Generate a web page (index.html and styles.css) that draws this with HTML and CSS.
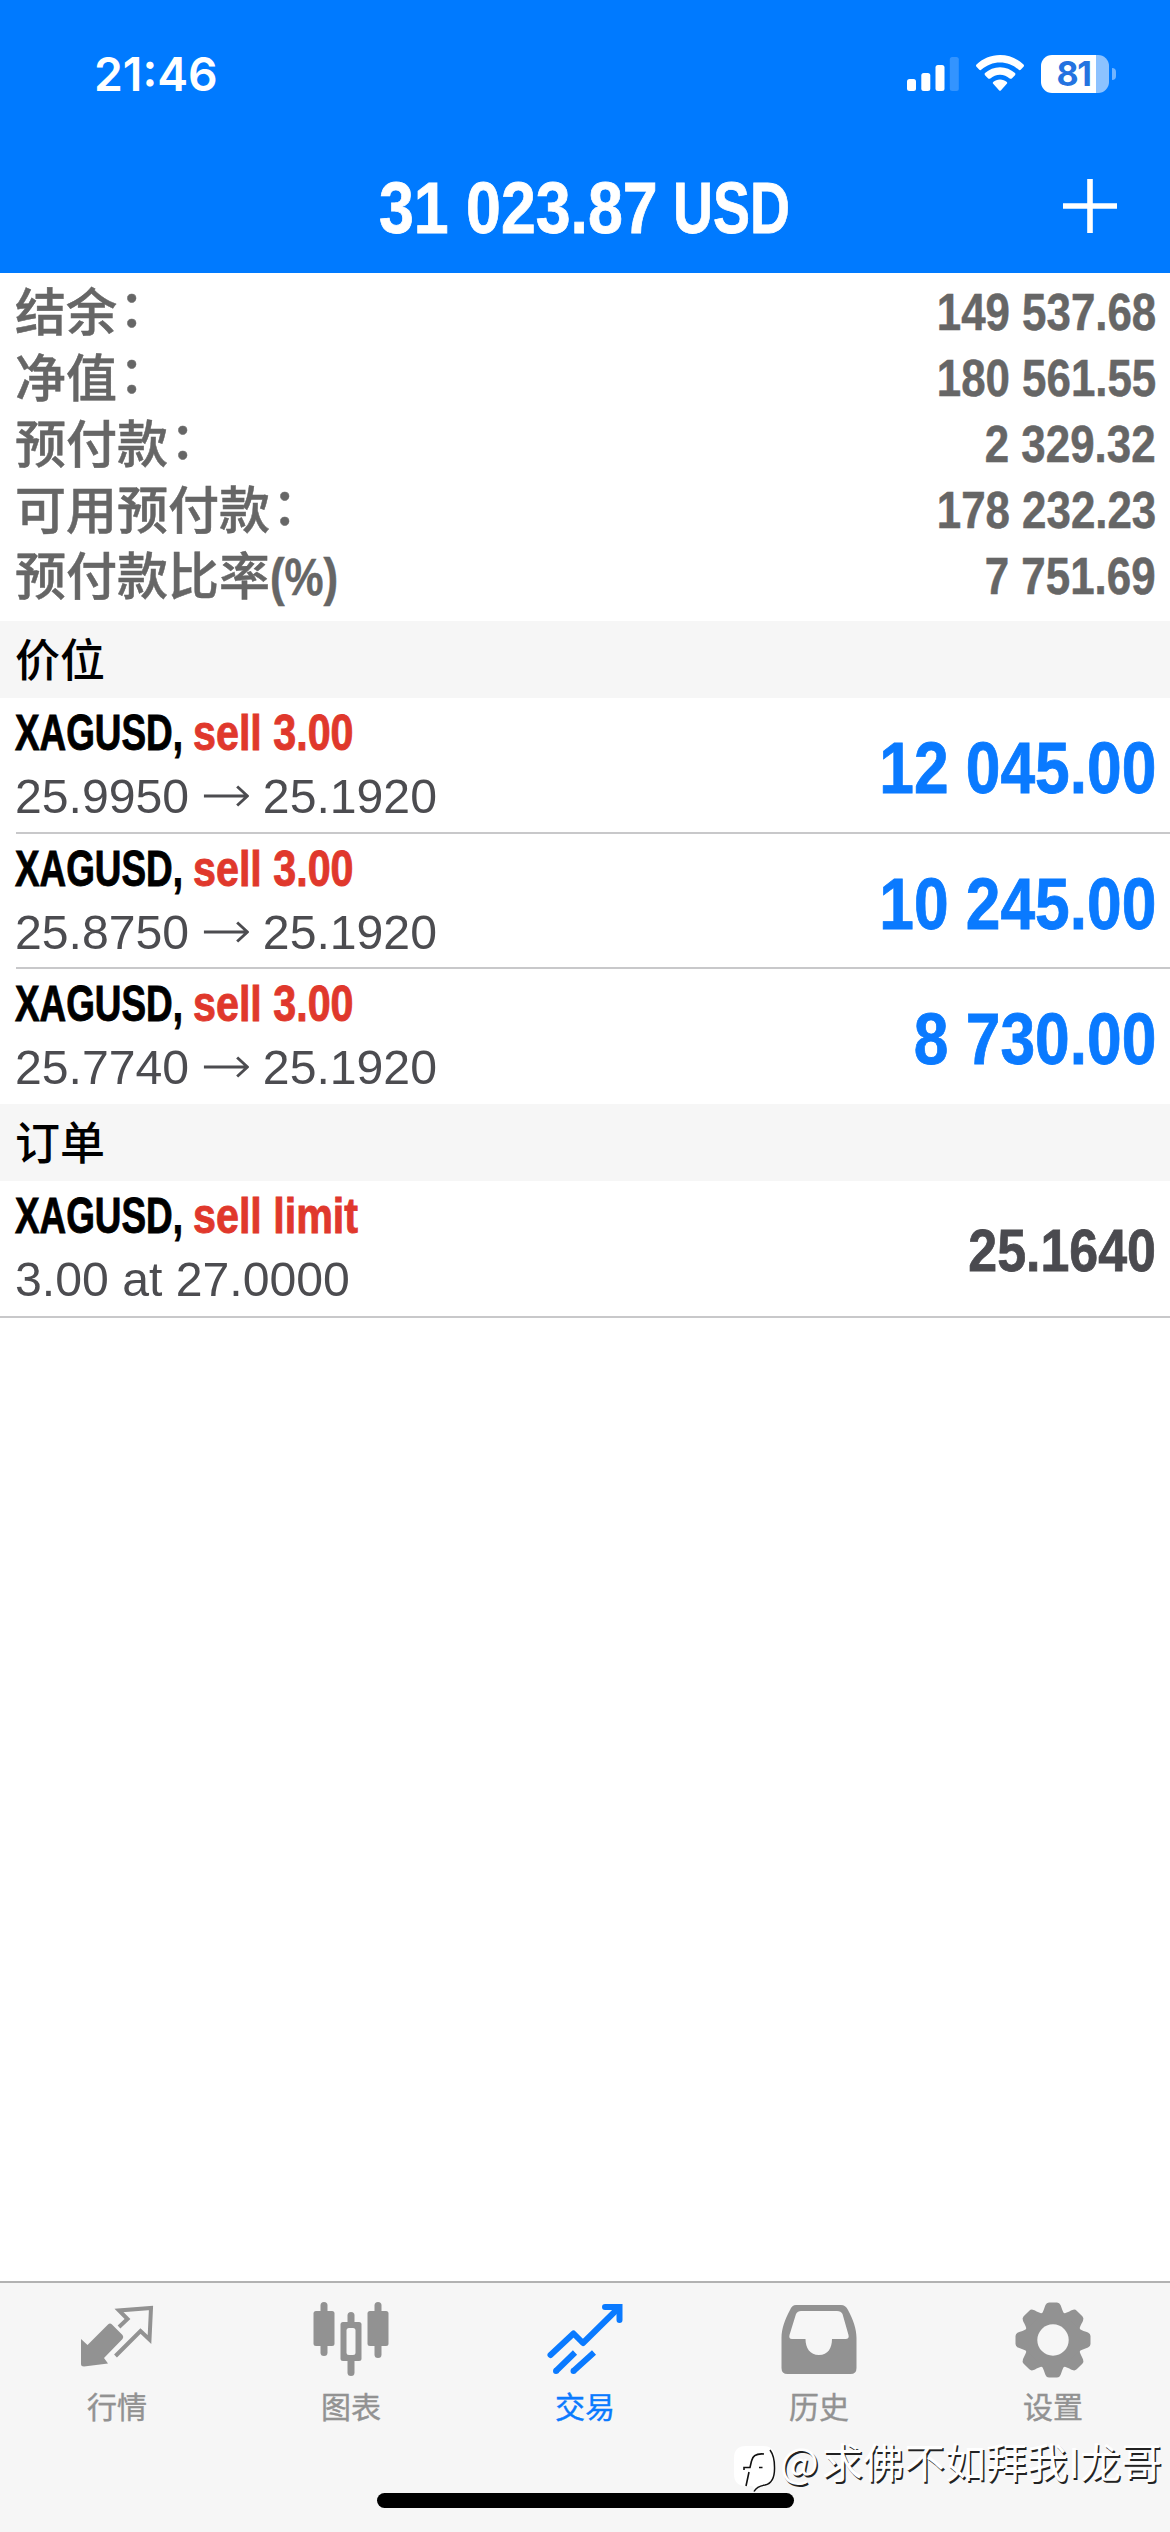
FILE: index.html
```html
<!DOCTYPE html>
<html lang="zh-CN">
<head>
<meta charset="utf-8">
<title>交易</title>
<link rel="stylesheet" href="styles.css">
</head>
<body>
<div class="app">
  <header class="header">
    <div class="status">
      <span class="clock">21:46</span>
      <div class="status-icons">
        <svg class="signal" width="52" height="34" viewBox="0 0 52 34" fill="#fff">
          <rect x="0" y="22" width="9" height="12" rx="2.5"/>
          <rect x="14.3" y="16" width="9" height="18" rx="2.5"/>
          <rect x="28.5" y="8" width="9" height="26" rx="2.5"/>
          <rect x="42.8" y="0" width="9" height="34" rx="2.5" opacity=".2"/>
        </svg>
        <svg class="wifi" width="48" height="36" viewBox="0 0 48 36" fill="#fff">
          <path d="M24 0C33 0 41.500 3.600 47.500 9.500Q48.500 10.700 47.500 11.700L44.700 14.700Q43.600 15.600 42.500 14.600C37.500 10 31 7.400 24 7.400S10.500 10 5.500 14.600Q4.400 15.600 3.300 14.700L.5 11.700Q-.5 10.700 .5 9.500C6.500 3.600 15 0 24 0Z"/>
          <path d="M24 12.300C29.700 12.300 35 14.500 39 18.100Q40 19.200 39 20.300L35.800 23.400Q34.800 24.300 33.700 23.400C31 21.100 27.700 19.700 24 19.700S17 21.100 14.300 23.400Q13.200 24.300 12.200 23.400L9 20.300Q8 19.200 9 18.100C13 14.500 18.300 12.300 24 12.300Z"/>
          <path d="M24 24.500C26.700 24.500 29 25.500 30.800 27Q31.600 27.900 30.800 28.800L25 35.200Q24 36.200 23 35.200L17.200 28.800Q16.400 27.900 17.200 27C19 25.500 21.300 24.500 24 24.500Z"/>
        </svg>
        <div class="battery"><span class="battery-level">81</span></div>
        <span class="battery-tip"></span>
      </div>
    </div>
    <div class="titlebar">
      <h1 class="title"><span class="title-num">31 023.87</span><span class="title-cur">USD</span></h1>
      <svg class="plus" width="54" height="54" viewBox="0 0 54 54"><path d="M27 0V54M0 27H54" stroke="#fff" stroke-width="5.6"/></svg>
    </div>
  </header>

  <main class="content">
    <dl class="summary">
      <div class="line"><dt>结余<i class="colon">：</i></dt><dd>149 537.68</dd></div>
      <div class="line"><dt>净值<i class="colon">：</i></dt><dd>180 561.55</dd></div>
      <div class="line"><dt>预付款<i class="colon">：</i></dt><dd>2 329.32</dd></div>
      <div class="line"><dt>可用预付款<i class="colon">：</i></dt><dd>178 232.23</dd></div>
      <div class="line"><dt>预付款比率<span class="pct">(%)</span></dt><dd>7 751.69</dd></div>
    </dl>

    <h2 class="section">价位</h2>
    <ul class="rows">
      <li class="row">
        <div class="info">
          <div class="head"><span class="sym">XAGUSD,</span><span class="side">sell 3.00</span></div>
          <div class="detail"><span>25.9950</span><svg class="arrow" width="46" height="22" viewBox="0 0 46 22"><path d="M0 11H44M34 1.500L44.500 11L34 20.500"/></svg><span>25.1920</span></div>
        </div>
        <div class="profit">12 045.00</div>
      </li>
      <li class="row">
        <div class="info">
          <div class="head"><span class="sym">XAGUSD,</span><span class="side">sell 3.00</span></div>
          <div class="detail"><span>25.8750</span><svg class="arrow" width="46" height="22" viewBox="0 0 46 22"><path d="M0 11H44M34 1.500L44.500 11L34 20.500"/></svg><span>25.1920</span></div>
        </div>
        <div class="profit">10 245.00</div>
      </li>
      <li class="row">
        <div class="info">
          <div class="head"><span class="sym">XAGUSD,</span><span class="side">sell 3.00</span></div>
          <div class="detail"><span>25.7740</span><svg class="arrow" width="46" height="22" viewBox="0 0 46 22"><path d="M0 11H44M34 1.500L44.500 11L34 20.500"/></svg><span>25.1920</span></div>
        </div>
        <div class="profit">8 730.00</div>
      </li>
    </ul>

    <h2 class="section">订单</h2>
    <ul class="rows orders">
      <li class="row">
        <div class="info">
          <div class="head"><span class="sym">XAGUSD,</span><span class="side">sell limit</span></div>
          <div class="detail"><span>3.00 at 27.0000</span></div>
        </div>
        <div class="price">25.1640</div>
      </li>
    </ul>
  </main>

  <nav class="tabs">
    <a class="tab">
      <svg width="76" height="76" viewBox="0 0 76 76">
        <path d="M2 37L8.500 43L29 22.500Q31 20.500 33 22.500L43.500 33Q45 35 43.500 37L25 56L29 61.500L5 64.500Q2 64.500 2 62Z" fill="#929292"/>
        <path d="M40 25L48.500 17L40 8.500L72 6L70.500 37.500L61.500 29L36.500 54" fill="none" stroke="#929292" stroke-width="4"/>
      </svg>
      <span>行情</span>
    </a>
    <a class="tab">
      <svg width="76" height="76" viewBox="0 0 76 76" fill="#929292">
        <rect x="7.500" y="0" width="7" height="54" rx="3.500"/><rect x=".5" y="9" width="21" height="35" rx="2.500"/>
        <rect x="61.500" y="0" width="7" height="56" rx="3.500"/><rect x="54.500" y="9" width="21" height="35" rx="2.500"/>
        <rect x="34.500" y="10" width="7" height="64" rx="3.500"/><rect x="27.500" y="20" width="21" height="39" rx="2.500"/>
        <rect x="33.500" y="26" width="9" height="27" rx="2.500" fill="#f6f6f6"/>
      </svg>
      <span>图表</span>
    </a>
    <a class="tab active">
      <svg width="76" height="76" viewBox="0 0 76 76" fill="none" stroke="#0a7aff" stroke-width="6">
        <path d="M3.500 53L26.500 31.500L36 41L71 6.500" stroke-linecap="round" stroke-linejoin="round"/>
        <path d="M58 5H72.500V18" stroke-linecap="round"/>
        <path d="M9 69L28 50.500M26.500 69L47 50.500"/>
        <path d="M9 69h.01M26.500 69h.01" stroke-linecap="round"/>
      </svg>
      <span>交易</span>
    </a>
    <a class="tab">
      <svg width="76" height="76" viewBox="0 0 76 76">
        <path fill="#929292" fill-rule="evenodd" d="M15 3H60Q64.500 3 67 8C72 17 75.500 27 75.500 36V66Q75.500 72 69.500 72H6.500Q.5 72 .5 66V36C.5 27 4 17 9 8Q11 3 15 3ZM20 9Q16.500 9 15 12L8.500 33Q7.500 37 11 37H24.500C24.500 46 29 53 38 53S51 46 51 37H64.500Q68.500 37 67.500 33L61.500 12Q60 9 56 9Z"/>
      </svg>
      <span>历史</span>
    </a>
    <a class="tab">
      <svg width="76" height="76" viewBox="-38 -38 76 76">
        <defs><path id="tooth" d="M-11.500 -26C-9.500 -28 -8.500 -33 -7.500 -35Q-6.500 -37.500 -4 -37.500H4Q6.500 -37.500 7.500 -35C8.500 -33 9.500 -28 11.500 -26Z"/></defs>
        <g fill="#929292">
          <circle r="29"/>
          <use href="#tooth"/><use href="#tooth" transform="rotate(45)"/><use href="#tooth" transform="rotate(90)"/><use href="#tooth" transform="rotate(135)"/>
          <use href="#tooth" transform="rotate(180)"/><use href="#tooth" transform="rotate(225)"/><use href="#tooth" transform="rotate(270)"/><use href="#tooth" transform="rotate(315)"/>
        </g>
        <circle r="15.700" fill="#f6f6f6"/>
      </svg>
      <span>设置</span>
    </a>
    <div class="home"></div>
    <div class="watermark">
      <svg width="44" height="48" viewBox="0 0 44 48">
        <path d="M12 1H29Q41 1 41 13V27Q41 40 29 41Q23 42 20 46Q20 41 17 41H12Q0 41 0 29V13Q0 1 12 1Z" fill="#fff"/>
        <path d="M36 5Q40.500 11 40.500 22Q41 38 31 40Q23 41 20 46.500" fill="none" stroke="#111" stroke-width="1.500"/>
        <path d="M30 9Q19 8 17.500 16L16 22.500H10V25M25 22.500H28.500M15 27L12 41" fill="none" stroke="#111" stroke-width="1.600"/>
      </svg>
      <span class="at">@</span><span>求佛不如拜我I龙哥</span>
    </div>
  </nav>
</div>
</body>
</html>
```
FILE: styles.css
```css
* { box-sizing: border-box; margin: 0; padding: 0; }
body { background: #fff; font-family: "Liberation Sans", "Noto Sans CJK SC", sans-serif; }
ul { list-style: none; }
.app { width: 1170px; height: 2532px; display: flex; flex-direction: column; overflow: hidden; }

/* header */
.header { height: 273px; background: #007aff; color: #fff; flex: none; }
.status { height: 141px; padding: 0 54px 0 94px; display: flex; justify-content: space-between; }
.clock { font: 600 47px/56px Inter, sans-serif; margin-top: 46px; height: 56px; transform: scaleX(.985); transform-origin: left; }
.status-icons { display: flex; align-items: flex-start; padding-top: 55px; }
.signal { margin: 2px 17px 0 0; }
.wifi { margin-right: 17px; }
.battery { width: 68px; height: 38px; border-radius: 11px; background: linear-gradient(90deg, #fff 55px, #8cc2ff 55px); }
.battery-level { display: block; width: 65px; text-align: center; color: #2473e0; font: 700 34px/38px Inter, sans-serif; letter-spacing: -1.500px; }
.battery-tip { width: 4px; height: 12px; margin: 13px 0 0 3px; border-radius: 0 6px 6px 0; background: #71b4ff; }
.titlebar { height: 132px; padding: 0 53px 0 379px; display: flex; justify-content: space-between; }
.title { display: flex; font-size: 72px; line-height: 82px; margin-top: 26px; font-weight: 700; white-space: nowrap; -webkit-text-stroke: .8px currentColor; }
.title-num { width: 294px; transform: scaleX(.87); transform-origin: left; }
.title-cur { transform: scaleX(.77); transform-origin: left; }
.plus { margin-top: 38px; }

/* account summary */
.content { flex: 1; }
.summary { height: 348px; padding: 3px 14px 0 15px; color: #666; }
.line { height: 66px; display: flex; justify-content: space-between; }
.line dt { font: 500 51px/66px "Liberation Sans", "Noto Sans CJK SC", sans-serif; padding-top: 5px; white-space: nowrap; -webkit-text-stroke: .5px currentColor; }
.colon { display: inline-block; font-style: normal; transform: translate(2px, -4px); }
.pct { display: inline-block; font-weight: 700; transform: scaleX(.86); transform-origin: left; }
.line dd { font-size: 51px; line-height: 66px; padding-top: 4px; font-weight: 700; transform: scaleX(.86); transform-origin: right; -webkit-text-stroke: .5px currentColor; }

.section { height: 77px; padding-left: 15px; background: #f6f6f6; color: #000; font: 500 45px/73px "Noto Sans CJK SC", sans-serif; }

/* positions and orders */
.row { height: 135px; margin-left: 16px; padding-right: 14px; display: flex; justify-content: space-between; border-bottom: 2px solid #c8c8ca; }
.row:first-child { height: 136px; }
.rows:not(.orders) .row:last-child { border-bottom: 0; }
.orders .row { height: 137px; margin-left: 0; padding-left: 16px; }
.head { height: 60px; margin-left: -1px; padding-top: 4px; display: flex; font-size: 50px; line-height: 62px; font-weight: 700; white-space: nowrap; -webkit-text-stroke: .9px currentColor; }
.sym { width: 178px; color: #000; transform: scaleX(.737); transform-origin: left; }
.side { color: #e0382c; transform: scaleX(.825); transform-origin: left; }
.detail { height: 76px; margin-left: -1px; display: flex; align-items: center; font-size: 49px; line-height: 76px; color: #4c4c50; white-space: nowrap; transform: scaleX(.983); transform-origin: left; }
.arrow { margin: 0 14px 0 15px; fill: none; stroke: #4c4c50; stroke-width: 3; }
.profit, .price { font-weight: 700; transform: scaleX(.865); transform-origin: right; white-space: nowrap; -webkit-text-stroke: .8px currentColor; }
.profit { font-size: 72px; line-height: 140px; color: #0a7aff; }
.price { font-size: 60px; line-height: 140px; color: #4a4a4f; }

/* tab bar */
.tabs { position: relative; height: 251px; flex: none; display: grid; grid-template-columns: repeat(5, 234px); align-items: start; background: #f6f6f6; border-top: 2px solid #b2b2b2; }
.tab { display: flex; flex-direction: column; align-items: center; padding-top: 19px; color: #929292; font: 400 30px/44px "Noto Sans CJK SC", sans-serif; -webkit-text-stroke: .4px currentColor; }
.tab span { margin-top: 5px; }
.tab.active { color: #0a7aff; }
.home { position: absolute; left: 377px; top: 210px; width: 417px; height: 15px; border-radius: 8px; background: #000; }
.watermark { position: absolute; left: 734px; top: 147px; display: flex; color: #fff; font: 400 41px/60px "Noto Sans CJK SC", sans-serif; text-shadow: 1.500px 1.500px 0 #222; white-space: nowrap; }
.watermark svg { margin-top: 15px; }
.watermark span { margin-left: -1px; }
.watermark .at { width: 46px; padding-left: 3px; }
```
